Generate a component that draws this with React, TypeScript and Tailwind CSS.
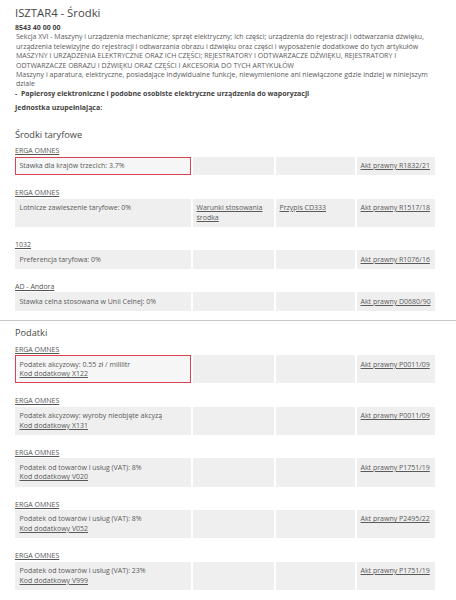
import React from "react";

type Row = {
  label: string;
  text: string;
  code?: string;
  col2?: string;
  col3?: string;
  act: string;
  red?: boolean;
};

const taryfowe: Row[] = [
  { label: "ERGA OMNES", text: "Stawka dla krajów trzecich: 3.7%", act: "Akt prawny R1832/21", red: true },
  { label: "ERGA OMNES", text: "Lotnicze zawieszenie taryfowe: 0%", col2: "Warunki stosowania środka", col3: "Przypis CD333", act: "Akt prawny R1517/18" },
  { label: "1032", text: "Preferencja taryfowa: 0%", act: "Akt prawny R1076/16" },
  { label: "AD - Andora", text: "Stawka celna stosowana w Unii Celnej: 0%", act: "Akt prawny D0680/90" },
];

const podatki: Row[] = [
  { label: "ERGA OMNES", text: "Podatek akcyzowy: 0.55 zł / mililitr", code: "Kod dodatkowy X122", act: "Akt prawny P0011/09", red: true },
  { label: "ERGA OMNES", text: "Podatek akcyzowy: wyroby nieobjęte akcyzą", code: "Kod dodatkowy X131", act: "Akt prawny P0011/09" },
  { label: "ERGA OMNES", text: "Podatek od towarów i usług (VAT): 8%", code: "Kod dodatkowy V020", act: "Akt prawny P1751/19" },
  { label: "ERGA OMNES", text: "Podatek od towarów i usług (VAT): 8%", code: "Kod dodatkowy V052", act: "Akt prawny P2495/22" },
  { label: "ERGA OMNES", text: "Podatek od towarów i usług (VAT): 23%", code: "Kod dodatkowy V999", act: "Akt prawny P1751/19" },
];

function Group({ row, first }: { row: Row; first?: boolean }) {
  return (
    <div className={first ? "" : "mt-[13px]"}>
      <div className="mb-[1px]">
        <a className="underline text-[#555]">{row.label}</a>
      </div>
      <div className="grid grid-cols-[176px_81px_79px_78px] gap-x-[2px] leading-[9.6px]">
        <div
          className={
            row.red
              ? "border border-[#d9424f] bg-[#f6f6f6] px-[3.5px] py-[3.5px]"
              : "bg-[#efefef] px-[4.5px] py-[4.5px]"
          }
        >
          <div>{row.text}</div>
          {row.code && (
            <div>
              <a className="underline">{row.code}</a>
            </div>
          )}
        </div>
        <div className="bg-[#efefef] px-[3.5px] py-[4.5px]">
          {row.col2 && <a className="underline">{row.col2}</a>}
        </div>
        <div className="bg-[#efefef] px-[3.5px] py-[4.5px]">
          {row.col3 && <a className="underline">{row.col3}</a>}
        </div>
        <div className="bg-[#efefef] px-[3.5px] py-[4.5px]">
          <a className="underline">{row.act}</a>
        </div>
      </div>
    </div>
  );
}

export default function App() {
  return (
    <div className="bg-white w-[456px] h-[600px] overflow-hidden font-['Open_Sans',sans-serif] text-[7px] leading-[9.4px] text-[#5a5a5a]">
      <div className="px-[15px] pt-[6px]">
        <div className="text-[11.3px] leading-[14px] text-[#474747]">ISZTAR4 - Środki</div>
        <div className="mt-[3px] font-bold text-[#444]">8543 40 00 00</div>
        <div className="pl-[1px] whitespace-nowrap">
          <div>Sekcja XVI - Maszyny i urządzenia mechaniczne; sprzęt elektryczny; ich części; urządzenia do rejestracji i odtwarzania dźwięku,</div>
          <div>urządzenia telewizyjne do rejestracji i odtwarzania obrazu i dźwięku oraz części i wyposażenie dodatkowe do tych artykułów</div>
          <div>MASZYNY I URZĄDZENIA ELEKTRYCZNE ORAZ ICH CZĘŚCI; REJESTRATORY I ODTWARZACZE DŹWIĘKU, REJESTRATORY I</div>
          <div>ODTWARZACZE OBRAZU I DŹWIĘKU ORAZ CZĘŚCI I AKCESORIA DO TYCH ARTYKUŁÓW</div>
          <div>Maszyny i aparatura, elektryczne, posiadające indywidualne funkcje, niewymienione ani niewłączone gdzie indziej w niniejszym</div>
          <div>dziale</div>
        </div>
        <div className="font-bold text-[#444] whitespace-pre">{"-  Papierosy elektroniczne i podobne osobiste elektryczne urządzenia do waporyzacji"}</div>
        <div className="mt-[4.5px] font-bold text-[#444]">Jednostka uzupełniająca:</div>

        <div className="mt-[17px] text-[9.2px] leading-[12px] text-[#474747]">Środki taryfowe</div>
        <div className="mt-[5px]">
          {taryfowe.map((r, i) => (
            <Group key={i} row={r} first={i === 0} />
          ))}
        </div>
      </div>
      <div className="mt-[9px] h-px bg-[#c8c8c8]" />
      <div className="px-[15px]">
        <div className="mt-[6px] text-[9.2px] leading-[12px] text-[#474747]">Podatki</div>
        <div className="mt-[6px]">
          {podatki.map((r, i) => (
            <Group key={i} row={r} first={i === 0} />
          ))}
        </div>
      </div>
    </div>
  );
}
